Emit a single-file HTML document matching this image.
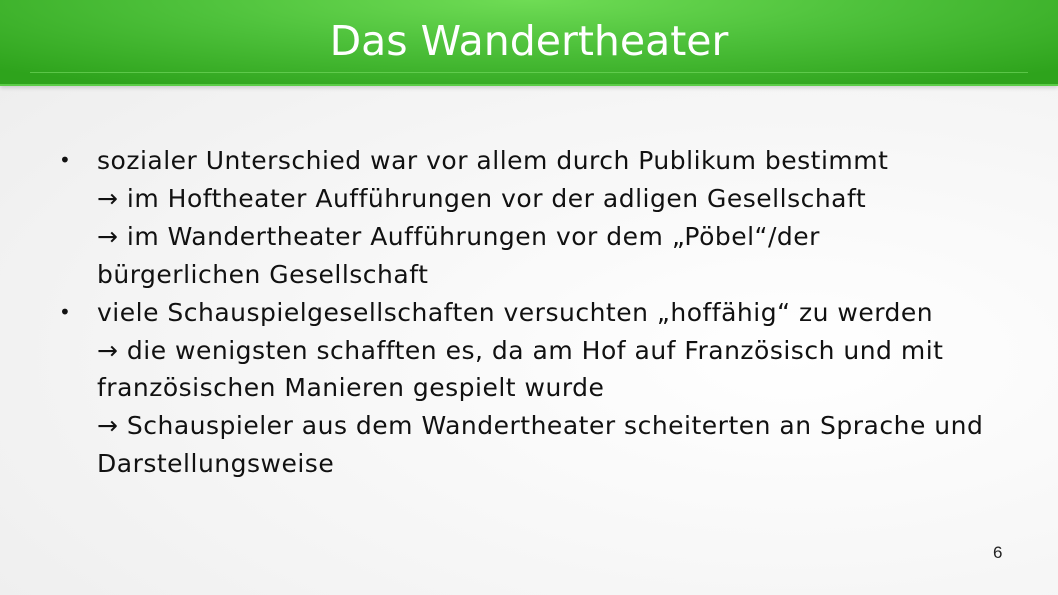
<!DOCTYPE html>
<html><head><meta charset="utf-8"><style>
html,body{margin:0;padding:0}
body{width:1058px;height:595px;overflow:hidden;position:relative;background:radial-gradient(ellipse at 75% 60%,#ffffff 0%,#f4f4f4 60%,#ececec 100%);font-family:"DejaVu Sans",sans-serif;}
.hdr{position:absolute;left:0;top:0;width:1058px;height:84px;background:radial-gradient(ellipse 70% 120% at 50% 0%,#6fdc55 0%,#4fc23c 45%,#2ea31c 100%);border-bottom:2px solid #5ccc48;box-shadow:0 2px 4px rgba(0,0,0,.15)}
.hdr .ln{position:absolute;left:30px;right:30px;top:72px;height:1px;background:rgba(120,220,100,.6)}
.hdr h1{margin:0;position:absolute;left:0;right:0;top:15px;text-align:center;color:#fff;font-weight:normal;font-size:41px;line-height:52px;letter-spacing:0}
.body{position:absolute;left:97px;top:142px;width:950px;font-size:25px;line-height:37.9px;color:#111;letter-spacing:0.5px}
.b{position:absolute;left:-38px;font-size:20px}
.pg{position:absolute;left:993px;top:543px;font-size:17px;color:#222;font-family:"Liberation Sans",sans-serif}
</style></head><body>
<div class="hdr"><div class="ln"></div><h1>Das Wandertheater</h1></div>
<div class="body">
<div style="position:relative"><span class="b">•</span>sozialer Unterschied war vor allem durch Publikum bestimmt<br>→ im Hoftheater Aufführungen vor der adligen Gesellschaft<br>→ im Wandertheater Aufführungen vor dem „Pöbel“/der<br>bürgerlichen Gesellschaft</div>
<div style="position:relative"><span class="b">•</span>viele Schauspielgesellschaften versuchten „hoffähig“ zu werden<br>→ die wenigsten schafften es, da am Hof auf Französisch und mit<br>französischen Manieren gespielt wurde<br>→ Schauspieler aus dem Wandertheater scheiterten an Sprache und<br>Darstellungsweise</div>
</div>
<div class="pg">6</div>
</body></html>
